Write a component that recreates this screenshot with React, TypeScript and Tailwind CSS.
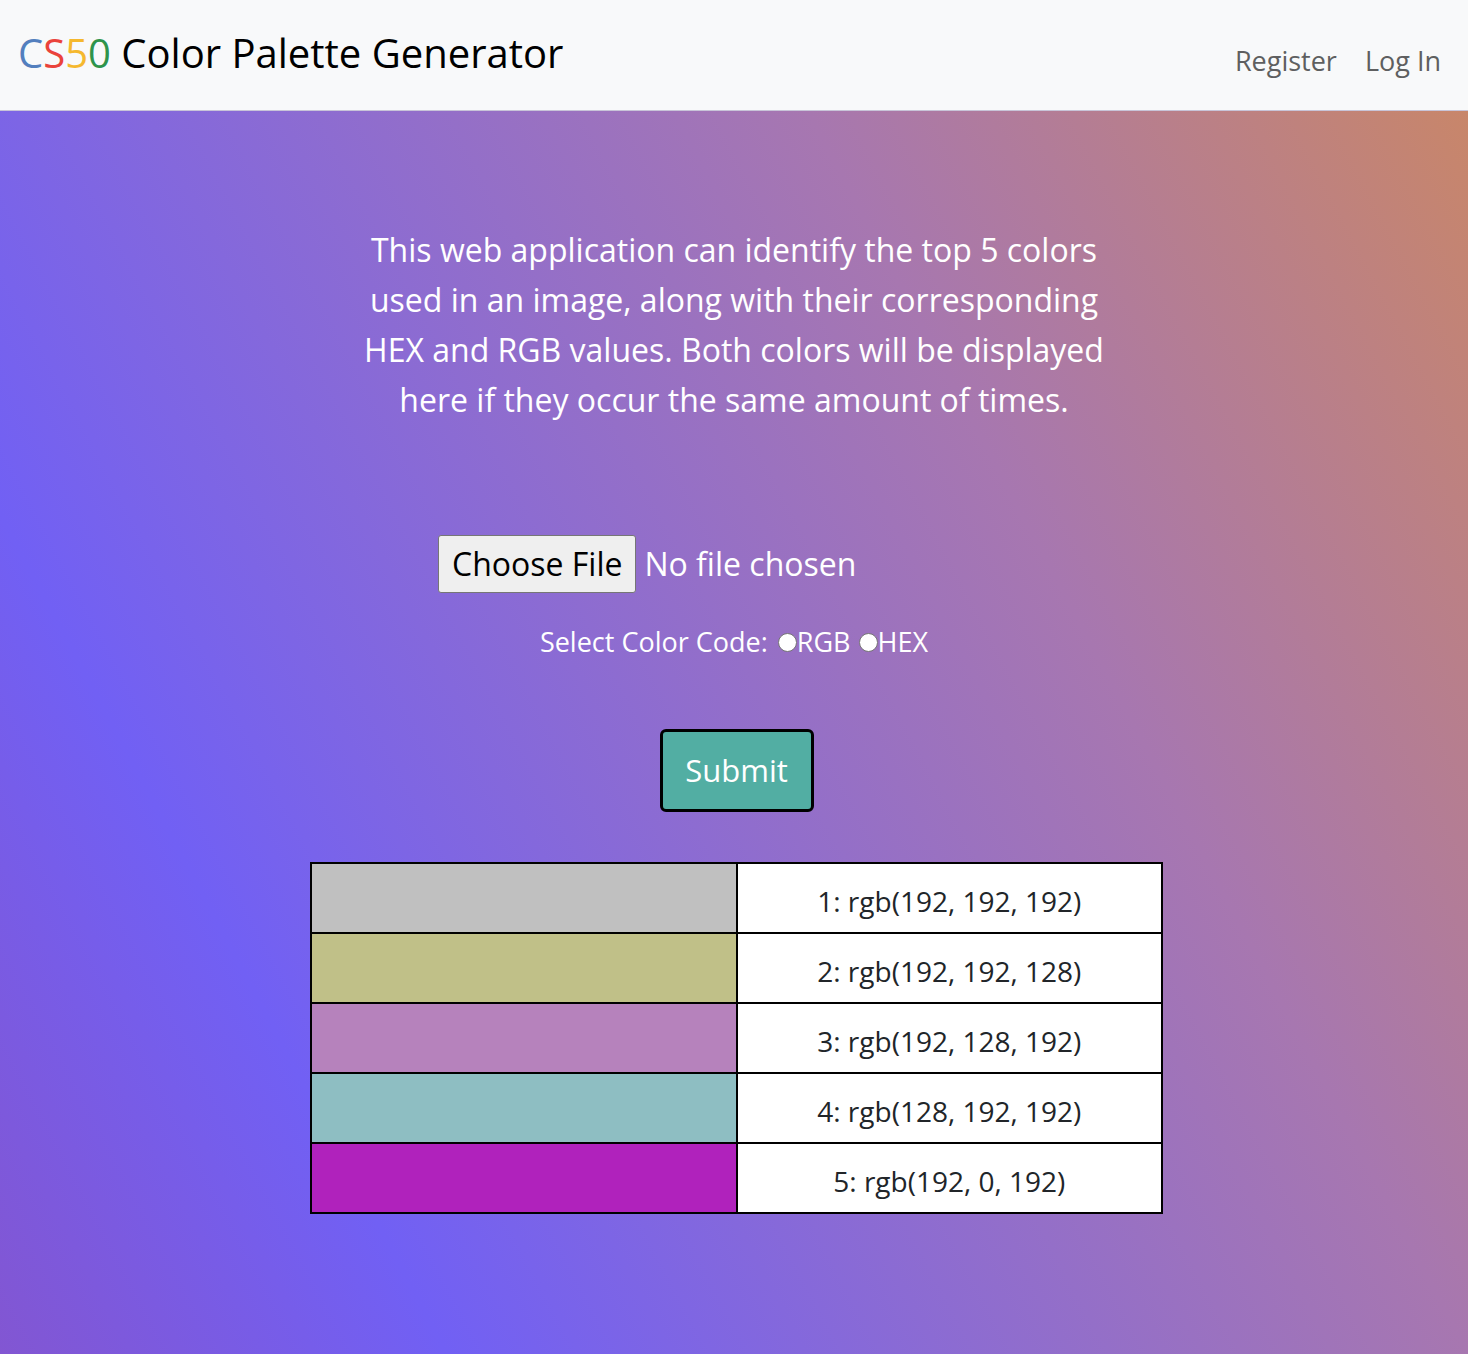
const colors = [
  { rgb: "rgb(192, 192, 192)", swatch: "bg-[#c0c0c0]" },
  { rgb: "rgb(192, 192, 128)", swatch: "bg-[#c0c088]" },
  { rgb: "rgb(192, 128, 192)", swatch: "bg-[#b682bc]" },
  { rgb: "rgb(128, 192, 192)", swatch: "bg-[#8ebec2]" },
  { rgb: "rgb(192, 0, 192)", swatch: "bg-[#b022bc]" },
];

export default function App() {
  return (
    <div className="min-h-screen font-['Open_Sans',sans-serif]">
      <nav className="h-[111px] bg-[#f8f9fa] border-b border-[#c8c4d8] flex items-center justify-between pl-[18px] pr-[27px]">
        <a className="text-[40px] leading-none -mt-[4px] text-black">
          <span className="text-[#537fbe]">C</span>
          <span className="text-[#ea433b]">S</span>
          <span className="text-[#f5b82e]">5</span>
          <span className="text-[#2e944b]">0</span> Color Palette Generator
        </a>
        <div className="flex gap-[28px] text-[27px] text-[#5e5f60] mt-[12px]">
          <a>Register</a>
          <a>Log In</a>
        </div>
      </nav>

      <main className="min-h-[1243px] bg-[linear-gradient(62deg,#8256d2_0%,#7160f4_21%,#a777b0_69%,#c8866a_100%)] pt-[114px] pb-[140px] text-white">
        <p className="mx-auto max-w-[775px] text-center text-[32px] leading-[50px]">
          This web application can identify the top 5 colors used in an image, along with their corresponding HEX and RGB values. Both colors will be displayed here if they occur the same amount of times.
        </p>

        <div className="mt-[110px] flex justify-center">
          <div className="w-[592px] flex items-center">
            <button className="h-[58px] px-[13px] bg-[#efefef] border border-[#767676] rounded-[3px] text-black text-[32px]">
              Choose File
            </button>
            <span className="ml-[8px] text-[32px]">No file chosen</span>
          </div>
        </div>

        <div className="mt-[29px] flex justify-center items-center text-[27px]">
          <span>Select Color Code: </span>
          <span className="ml-[10px] w-[19px] h-[19px] rounded-full bg-white border border-[#767676]" />
          <span>RGB</span>
          <span className="ml-[8px] w-[19px] h-[19px] rounded-full bg-white border border-[#767676]" />
          <span>HEX</span>
        </div>

        <div className="mt-[66px] pl-[5px] flex justify-center">
          <button className="w-[154px] h-[83px] bg-[#52aea3] border-[3px] border-black rounded-[6px] text-white text-[31px]">
            Submit
          </button>
        </div>

        <table className="mt-[50px] ml-[calc(50%-424px)] w-[853px] border-collapse border-2 border-black">
          <tbody>
            {colors.map((c, i) => (
              <tr key={i} className="h-[70px]">
                <td className={`w-1/2 border-2 border-black ${c.swatch}`} />
                <td className="w-1/2 border-2 border-black bg-white text-center text-[28px] text-[#212529] pt-[7px]">
                  {i + 1}: {c.rgb}
                </td>
              </tr>
            ))}
          </tbody>
        </table>
      </main>
    </div>
  );
}
